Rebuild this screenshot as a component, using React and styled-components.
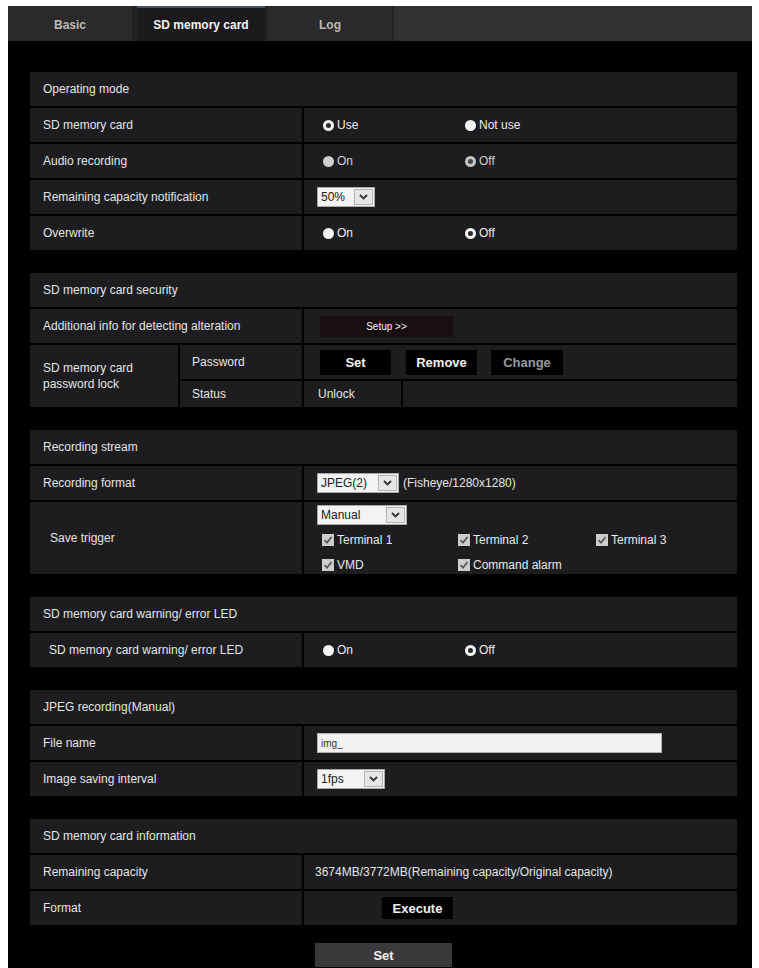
import React from "react";
import styled, { createGlobalStyle } from "styled-components";

const GlobalStyle = createGlobalStyle`
  html, body {
    margin: 0;
    padding: 0;
    background: #ffffff;
  }
  body {
    font-family: "Liberation Sans", Arial, sans-serif;
    -webkit-font-smoothing: antialiased;
  }
`;

const Page = styled.div`
  padding: 6px 7px 0 8px;
  background: #ffffff;
`;

const Panel = styled.div`
  background: #000000;
  min-height: 962px;
`;

/* ---------- tabs ---------- */

const TabBar = styled.div`
  display: flex;
  height: 35px;
  background: #313133;
`;

const Tab = styled.div`
  box-sizing: border-box;
  width: ${(p) => p.$w}px;
  display: flex;
  align-items: center;
  justify-content: center;
  padding-top: 1px;
  font-size: 12px;
  font-weight: bold;
  color: ${(p) => (p.$active ? "#f4f4f4" : "#b9b9b9")};
  background: ${(p) => (p.$active ? "#1b1b1d" : "#2a2a2c")};
  border-top: 2px solid ${(p) => (p.$active ? "#3b536b" : "#2a2a2c")};
`;

const TabGap = styled.div`
  width: ${(p) => p.$w}px;
  background: #222224;
`;

/* ---------- sections ---------- */

const Content = styled.div`
  padding: 31px 15px 0 22px;
`;

const Section = styled.section`
  display: grid;
  grid-template-columns: 148px 122px 1fr;
  column-gap: 2px;
  row-gap: 2px;
  margin-bottom: 23px;
`;

const Cell = styled.div`
  box-sizing: border-box;
  min-height: ${(p) => p.$h || 34}px;
  background: #1d1d1f;
  color: #e4e4e4;
  font-size: 12px;
  display: flex;
  align-items: center;
  padding-left: ${(p) => (p.$pad != null ? p.$pad : 13)}px;
  grid-column: ${(p) => p.$span || "auto"};
  grid-row: ${(p) => p.$rows || "auto"};
`;

const HeaderCell = styled(Cell)`
  grid-column: 1 / -1;
`;

const LabelCell = styled(Cell)`
  grid-column: ${(p) => p.$span || "1 / 3"};
  line-height: 16px;
`;

const ValueCell = styled(Cell)`
  grid-column: 3;
`;

const SplitValue = styled.div`
  grid-column: 3;
  display: grid;
  grid-template-columns: 97px 1fr;
  column-gap: 2px;
`;

/* ---------- radio buttons ---------- */

const RadioRow = styled.div`
  display: grid;
  grid-template-columns: 142px 142px;
  padding-left: 6px;
`;

const RadioLabel = styled.span`
  display: inline-flex;
  align-items: center;
  gap: 3px;
  color: ${(p) => (p.$muted ? "#d0d0d0" : "#ececec")};
`;

const RadioDot = styled.span`
  box-sizing: border-box;
  width: 11px;
  height: 11px;
  border-radius: 50%;
  background: ${(p) => (p.$muted ? "#cfcfcf" : "#f4f4f4")};
  border: ${(p) => (p.$checked ? `3px solid ${p.$muted ? "#c4c4c4" : "#f4f4f4"}` : "none")};
  ${(p) => (p.$checked ? `background: ${p.$muted ? "#4a4a4c" : "#2a2a2c"};` : "")}
`;

const Radio = ({ checked, muted, children }) => (
  <RadioLabel $muted={muted}>
    <RadioDot $checked={checked} $muted={muted} />
    {children}
  </RadioLabel>
);

/* ---------- select boxes ---------- */

const SelectBox = styled.div`
  box-sizing: border-box;
  display: inline-flex;
  width: ${(p) => p.$w}px;
  height: 20px;
  background: #f3f3f3;
  border: 1px solid #a8a8a8;
  color: #222;
  font-size: 12px;
  flex-shrink: 0;
`;

const SelectText = styled.span`
  flex: 1;
  display: flex;
  align-items: center;
  padding-left: 3px;
`;

const SelectArrow = styled.span`
  width: 17px;
  margin: 1px;
  border: 1px solid #b4b4b4;
  background: #e6e6e6;
  display: flex;
  align-items: center;
  justify-content: center;
`;

const Select = ({ w, value }) => (
  <SelectBox $w={w}>
    <SelectText>{value}</SelectText>
    <SelectArrow>
      <svg width="9" height="6" viewBox="0 0 9 6">
        <path d="M1 1 L4.5 4.5 L8 1" fill="none" stroke="#333" strokeWidth="1.8" />
      </svg>
    </SelectArrow>
  </SelectBox>
);

const Note = styled.span`
  margin-left: 4px;
  color: #e4e4e4;
`;

/* ---------- checkboxes ---------- */

const CheckGrid = styled.div`
  display: grid;
  grid-template-columns: 136px 138px 120px;
  row-gap: 11px;
  padding-left: 5px;
`;

const CheckLabel = styled.span`
  display: inline-flex;
  align-items: center;
  gap: 3px;
  color: #e8e8e8;
`;

const CheckBox = styled.span`
  width: 12px;
  height: 12px;
  background: #cdcdcd;
  display: inline-flex;
  align-items: center;
  justify-content: center;
`;

const Check = ({ children }) => (
  <CheckLabel>
    <CheckBox>
      <svg width="10" height="10" viewBox="0 0 10 10">
        <path d="M1.5 5.2 L4 7.6 L8.6 2" fill="none" stroke="#5a5a5a" strokeWidth="1.8" />
      </svg>
    </CheckBox>
    {children}
  </CheckLabel>
);

const TriggerStack = styled.div`
  display: flex;
  flex-direction: column;
  gap: 8px;
  padding-top: 1px;
`;

/* ---------- buttons & inputs ---------- */

const Button = styled.div`
  box-sizing: border-box;
  width: ${(p) => p.$w}px;
  height: ${(p) => p.$h || 25}px;
  margin-left: ${(p) => p.$ml || 0}px;
  display: flex;
  align-items: center;
  justify-content: center;
  background: ${(p) => p.$bg || "#000"};
  color: ${(p) => p.$color || "#f4f4f4"};
  font-size: ${(p) => p.$size || 13}px;
  font-weight: ${(p) => (p.$bold === false ? "normal" : "bold")};
  flex-shrink: 0;
`;

const ButtonRow = styled.div`
  display: flex;
  align-items: center;
`;

const TextInput = styled.div`
  box-sizing: border-box;
  width: 345px;
  height: 20px;
  background: #f2f2f2;
  border: 1px solid #b0b0b0;
  color: #333;
  font-size: 10px;
  display: flex;
  align-items: center;
  padding-left: 3px;
`;

const Footer = styled.div`
  display: flex;
  justify-content: center;
  margin-top: -5px;
`;

export default function App() {
  return (
    <>
      <GlobalStyle />
      <Page>
        <Panel>
          <TabBar>
            <Tab $w={124}>Basic</Tab>
            <TabGap $w={5} />
            <Tab $w={128} $active>
              SD memory card
            </Tab>
            <TabGap $w={3} />
            <Tab $w={124}>Log</Tab>
            <TabGap $w={2} />
          </TabBar>

          <Content>
            <Section>
              <HeaderCell>Operating mode</HeaderCell>
              <LabelCell>SD memory card</LabelCell>
              <ValueCell>
                <RadioRow>
                  <Radio checked>Use</Radio>
                  <Radio>Not use</Radio>
                </RadioRow>
              </ValueCell>
              <LabelCell>Audio recording</LabelCell>
              <ValueCell>
                <RadioRow>
                  <Radio muted>On</Radio>
                  <Radio checked muted>
                    Off
                  </Radio>
                </RadioRow>
              </ValueCell>
              <LabelCell>Remaining capacity notification</LabelCell>
              <ValueCell>
                <Select w={58} value="50%" />
              </ValueCell>
              <LabelCell>Overwrite</LabelCell>
              <ValueCell>
                <RadioRow>
                  <Radio>On</Radio>
                  <Radio checked>Off</Radio>
                </RadioRow>
              </ValueCell>
            </Section>

            <Section>
              <HeaderCell>SD memory card security</HeaderCell>
              <LabelCell>Additional info for detecting alteration</LabelCell>
              <ValueCell $pad={16}>
                <Button $w={133} $h={21} $bg="#170f10" $size={10} $bold={false}>
                  Setup &gt;&gt;
                </Button>
              </ValueCell>
              <LabelCell $span="1" $rows="span 2">
                SD memory card
                <br />
                password lock
              </LabelCell>
              <Cell $span="2" $pad={12}>
                Password
              </Cell>
              <ValueCell $pad={16}>
                <ButtonRow>
                  <Button $w={71}>Set</Button>
                  <Button $w={71} $ml={15}>
                    Remove
                  </Button>
                  <Button $w={72} $ml={14} $color="#9a9a9a">
                    Change
                  </Button>
                </ButtonRow>
              </ValueCell>
              <Cell $span="2" $pad={12} $h={26}>
                Status
              </Cell>
              <SplitValue>
                <Cell $h={26} $pad={14}>
                  Unlock
                </Cell>
                <Cell $h={26} />
              </SplitValue>
            </Section>

            <Section>
              <HeaderCell>Recording stream</HeaderCell>
              <LabelCell>Recording format</LabelCell>
              <ValueCell>
                <Select w={82} value="JPEG(2)" />
                <Note>(Fisheye/1280x1280)</Note>
              </ValueCell>
              <LabelCell $pad={20} $h={72}>
                Save trigger
              </LabelCell>
              <ValueCell $h={72}>
                <TriggerStack>
                  <Select w={90} value="Manual" />
                  <CheckGrid>
                    <Check>Terminal 1</Check>
                    <Check>Terminal 2</Check>
                    <Check>Terminal 3</Check>
                    <Check>VMD</Check>
                    <Check>Command alarm</Check>
                  </CheckGrid>
                </TriggerStack>
              </ValueCell>
            </Section>

            <Section>
              <HeaderCell>SD memory card warning/ error LED</HeaderCell>
              <LabelCell $pad={19}>SD memory card warning/ error LED</LabelCell>
              <ValueCell>
                <RadioRow>
                  <Radio>On</Radio>
                  <Radio checked>Off</Radio>
                </RadioRow>
              </ValueCell>
            </Section>

            <Section>
              <HeaderCell>JPEG recording(Manual)</HeaderCell>
              <LabelCell>File name</LabelCell>
              <ValueCell>
                <TextInput>img_</TextInput>
              </ValueCell>
              <LabelCell>Image saving interval</LabelCell>
              <ValueCell>
                <Select w={68} value="1fps" />
              </ValueCell>
            </Section>

            <Section>
              <HeaderCell>SD memory card information</HeaderCell>
              <LabelCell>Remaining capacity</LabelCell>
              <ValueCell $pad={11}>
                3674MB/3772MB(Remaining capacity/Original capacity)
              </ValueCell>
              <LabelCell>Format</LabelCell>
              <ValueCell $pad={78} $h={32}>
                <Button $w={71} $h={22}>
                  Execute
                </Button>
              </ValueCell>
            </Section>

            <Footer>
              <Button $w={137} $h={24} $bg="#3a3a3c">
                Set
              </Button>
            </Footer>
          </Content>
        </Panel>
      </Page>
    </>
  );
}
